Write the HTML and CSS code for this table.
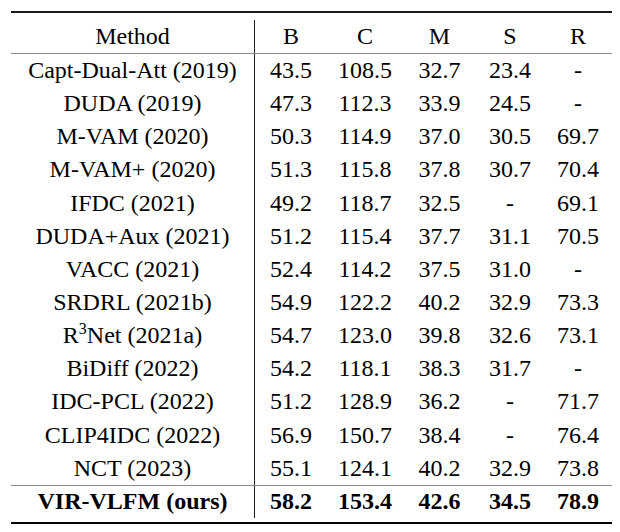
FILE: index.html
```html
<!DOCTYPE html>
<html lang="en">
<head>
<meta charset="utf-8">
<title>Results</title>
<link rel="stylesheet" href="styles.css">
</head>
<body class="page">
<div class="wrap">
  <div class="row head"><div class="cell meth">Method</div><div class="cell">B</div><div class="cell">C</div><div class="cell">M</div><div class="cell">S</div><div class="cell">R</div></div>
  <div class="row"><div class="cell meth">Capt-Dual-Att (2019)</div><div class="cell">43.5</div><div class="cell">108.5</div><div class="cell">32.7</div><div class="cell">23.4</div><div class="cell">-</div></div>
  <div class="row"><div class="cell meth">DUDA (2019)</div><div class="cell">47.3</div><div class="cell">112.3</div><div class="cell">33.9</div><div class="cell">24.5</div><div class="cell">-</div></div>
  <div class="row"><div class="cell meth">M-VAM (2020)</div><div class="cell">50.3</div><div class="cell">114.9</div><div class="cell">37.0</div><div class="cell">30.5</div><div class="cell">69.7</div></div>
  <div class="row"><div class="cell meth">M-VAM+ (2020)</div><div class="cell">51.3</div><div class="cell">115.8</div><div class="cell">37.8</div><div class="cell">30.7</div><div class="cell">70.4</div></div>
  <div class="row"><div class="cell meth">IFDC (2021)</div><div class="cell">49.2</div><div class="cell">118.7</div><div class="cell">32.5</div><div class="cell">-</div><div class="cell">69.1</div></div>
  <div class="row"><div class="cell meth">DUDA+Aux (2021)</div><div class="cell">51.2</div><div class="cell">115.4</div><div class="cell">37.7</div><div class="cell">31.1</div><div class="cell">70.5</div></div>
  <div class="row"><div class="cell meth">VACC (2021)</div><div class="cell">52.4</div><div class="cell">114.2</div><div class="cell">37.5</div><div class="cell">31.0</div><div class="cell">-</div></div>
  <div class="row"><div class="cell meth">SRDRL (2021b)</div><div class="cell">54.9</div><div class="cell">122.2</div><div class="cell">40.2</div><div class="cell">32.9</div><div class="cell">73.3</div></div>
  <div class="row"><div class="cell meth"><span>R<span class="sup">3</span>Net (2021a)</span></div><div class="cell">54.7</div><div class="cell">123.0</div><div class="cell">39.8</div><div class="cell">32.6</div><div class="cell">73.1</div></div>
  <div class="row"><div class="cell meth">BiDiff (2022)</div><div class="cell">54.2</div><div class="cell">118.1</div><div class="cell">38.3</div><div class="cell">31.7</div><div class="cell">-</div></div>
  <div class="row"><div class="cell meth">IDC-PCL (2022)</div><div class="cell">51.2</div><div class="cell">128.9</div><div class="cell">36.2</div><div class="cell">-</div><div class="cell">71.7</div></div>
  <div class="row"><div class="cell meth">CLIP4IDC (2022)</div><div class="cell">56.9</div><div class="cell">150.7</div><div class="cell">38.4</div><div class="cell">-</div><div class="cell">76.4</div></div>
  <div class="row"><div class="cell meth">NCT (2023)</div><div class="cell">55.1</div><div class="cell">124.1</div><div class="cell">40.2</div><div class="cell">32.9</div><div class="cell">73.8</div></div>
  <div class="row ours"><div class="cell meth">VIR-VLFM (ours)</div><div class="cell">58.2</div><div class="cell">153.4</div><div class="cell">42.6</div><div class="cell">34.5</div><div class="cell">78.9</div></div>
</div>
</body>
</html>
```

FILE: styles.css
```css
body {
  margin: 0;
}
.page {
  font-family: "Liberation Serif";
  font-size: 24px;
}
.wrap {
  margin: 11px 0 0 11px;
  width: 601px;
  border-top: 2px solid #1a1a1a;
  border-bottom: 2px solid #000;
  padding: 7px 0 4px 0;
}
.row {
  display: grid;
  grid-template-columns: 244px 72px 76px 73px 68px 68px;
  height: 33.15px;
}
.row.head {
  height: 34px;
  border-bottom: 1px solid #8a8a8a;
  box-sizing: border-box;
}
.row.ours {
  height: 33px;
  border-top: 1px solid #8a8a8a;
  box-sizing: border-box;
  font-weight: bold;
}
.cell {
  display: flex;
  align-items: center;
  justify-content: center;
}
.meth {
  border-right: 1px solid #222;
  box-sizing: border-box;
}
.sup {
  font-size: 16px;
  position: relative;
  top: -9px;
}
```
